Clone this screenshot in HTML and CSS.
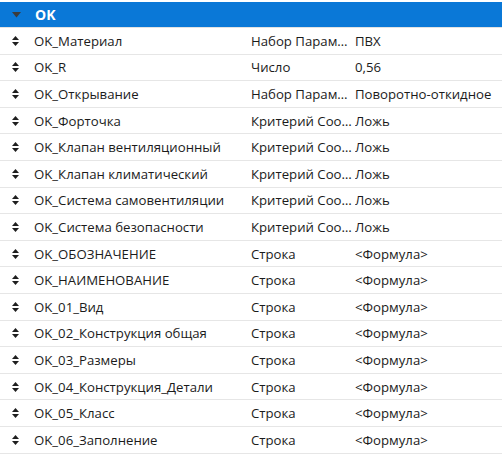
FILE: index.html
```html
<!DOCTYPE html>
<html>
<head>
<meta charset="utf-8">
<link rel="stylesheet" href="styles.css">
</head>
<body>
<div class="grid">
  <div class="group">
    <svg class="caret" width="9" height="6" viewBox="0 0 9 6"><path d="M0 0H9L4.5 5.5Z" fill="#3c3c3c"/></svg>
    <span class="gtitle">OK</span>
  </div>
  <div class="rows" id="rows"></div>
</div>
<script src="app.js"></script>
</body>
</html>
```
FILE: app.js
```js
const data = [
  ["OK_Материал","Набор Параметров","ПВХ"],
  ["OK_R","Число","0,56"],
  ["OK_Открывание","Набор Параметров","Поворотно-откидное"],
  ["OK_Форточка","Критерий Соответствия","Ложь"],
  ["OK_Клапан вентиляционный","Критерий Соответствия","Ложь"],
  ["OK_Клапан климатический","Критерий Соответствия","Ложь"],
  ["OK_Система самовентиляции","Критерий Соответствия","Ложь"],
  ["OK_Система безопасности","Критерий Соответствия","Ложь"],
  ["OK_ОБОЗНАЧЕНИЕ","Строка","<Формула>"],
  ["OK_НАИМЕНОВАНИЕ","Строка","<Формула>"],
  ["OK_01_Вид","Строка","<Формула>"],
  ["OK_02_Конструкция общая","Строка","<Формула>"],
  ["OK_03_Размеры","Строка","<Формула>"],
  ["OK_04_Конструкция_Детали","Строка","<Формула>"],
  ["OK_05_Класс","Строка","<Формула>"],
  ["OK_06_Заполнение","Строка","<Формула>"]
];
const rows = document.getElementById('rows');
const icon = '<svg class="sort" width="7" height="10" viewBox="0 0 7 10"><path d="M0 4H7L3.5 0Z M0 6H7L3.5 10Z" fill="#1e1e1e"/></svg>';
for (const [n,t,v] of data) {
  const r = document.createElement('div');
  r.className = 'row';
  r.innerHTML = '<div class="c-icon">'+icon+'</div>' +
    '<div class="c-name"></div><div class="c-type"></div><div class="c-val"></div>';
  r.querySelector('.c-name').textContent = n;
  r.querySelector('.c-type').textContent = t;
  r.querySelector('.c-val').textContent = v;
  rows.appendChild(r);
}
```
FILE: styles.css
```css
html, body { margin: 0; padding: 0; background: #fff; }
body {
  font-family: "Open Sans", "Noto Sans", "DejaVu Sans", sans-serif;
  font-size: 13.2px;
  color: #1b1b1b;
  width: 502px;
  height: 455px;
  overflow: hidden;
}
.grid { display: flex; flex-direction: column; }
.group {
  height: 25px;
  margin-top: 2px;
  background: #0a78d7;
  display: flex;
  align-items: center;
  border-bottom: 1px solid #e2e2e2;
}
.caret { margin-left: 12px; }
.gtitle {
  margin-left: 14px;
  color: #fff;
  font-weight: 700;
  font-size: 14px;
}
.rows { display: flex; flex-direction: column; }
.row {
  height: 25.6px;
  border-bottom: 1px solid #e6e6e6;
  display: grid;
  grid-template-columns: 34px 217px 104px 1fr;
  align-items: center;
}
.c-icon { display: flex; align-items: center; padding-left: 12px; }
.c-name, .c-type, .c-val {
  white-space: nowrap;
  overflow: hidden;
  text-overflow: ellipsis;
}
.c-type { padding-right: 3px; }
```
